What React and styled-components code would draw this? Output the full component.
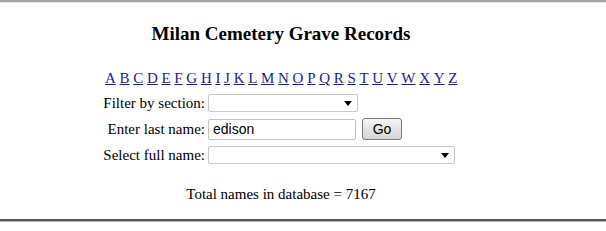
import styled, { createGlobalStyle } from "styled-components";

const GlobalStyle = createGlobalStyle`
  html, body {
    margin: 0;
    padding: 0;
    background: #fff;
  }
  body {
    font-family: "Liberation Serif", "Times New Roman", serif;
    color: #000;
  }
`;

const Frame = styled.div`
  width: 606px;
  height: 231px;
  box-sizing: border-box;
  border-top: 2px solid #a3a3a3;
  display: flex;
  flex-direction: column;
  overflow: hidden;
`;

const TopShade = styled.div`
  height: 1px;
  background: #e6e6e6;
`;

const Content = styled.div`
  width: 562px;
  height: 216px;
  display: flex;
  flex-direction: column;
  align-items: center;
`;

const Title = styled.h1`
  margin: 20px 0 0;
  font-size: 19px;
  line-height: 22px;
  font-weight: 700;
`;

const Block = styled.div`
  margin: 24px 0 0 4px;
  width: 356px;
  display: flex;
  flex-direction: column;
`;

const Letters = styled.div`
  display: flex;
  gap: 3.7px;
  font-size: 15px;
  line-height: 18px;
`;

const Letter = styled.a`
  color: #1d1d8f;
  text-decoration: underline;
`;

const Form = styled.div`
  margin-top: 7px;
  display: grid;
  grid-template-columns: 100px auto;
  column-gap: 3px;
  row-gap: 6px;
  align-items: center;
  justify-items: start;
`;

const Label = styled.label`
  justify-self: end;
  font-size: 15px;
  line-height: 18px;
  white-space: nowrap;
`;

const SelectWrap = styled.div`
  position: relative;
  width: ${(p) => p.$width}px;
  height: 18px;
`;

const Select = styled.select`
  appearance: none;
  display: block;
  width: 100%;
  height: 100%;
  box-sizing: border-box;
  border: 1px solid #c9c9c9;
  border-radius: 2px;
  background: #fff;
  font-family: "Liberation Sans", Arial, sans-serif;
  font-size: 13px;
  padding: 0 4px;
`;

const Arrow = styled.span`
  position: absolute;
  right: 6px;
  top: 7px;
  width: 0;
  height: 0;
  border-left: 4px solid transparent;
  border-right: 4px solid transparent;
  border-top: 5px solid #000;
  pointer-events: none;
`;

const InputRow = styled.div`
  display: flex;
  align-items: center;
  gap: 6px;
`;

const TextInput = styled.input`
  width: 148px;
  height: 21px;
  box-sizing: border-box;
  border: 1px solid #c4c4c4;
  border-radius: 2px;
  font-family: "Liberation Sans", Arial, sans-serif;
  font-size: 14px;
  padding: 0 4px;
  color: #000;
  outline: none;
`;

const GoButton = styled.button`
  width: 40px;
  height: 22px;
  box-sizing: border-box;
  border: 1px solid #7a7a7a;
  border-radius: 3px;
  background: linear-gradient(#f6f6f6, #e4e4e4 50%, #d6d6d6);
  font-family: "Liberation Sans", Arial, sans-serif;
  font-size: 14px;
  color: #000;
  padding: 0;
`;

const Total = styled.div`
  margin-top: 21px;
  font-size: 15px;
  line-height: 18px;
`;

const Spacer = styled.div`
  flex: 1;
`;

const BottomRule = styled.div`
  height: 2px;
  background: #585858;
`;

const BottomShade = styled.div`
  height: 1px;
  background: #b5b5b5;
`;

const BottomFill = styled.div`
  flex: 1;
  background: #fff;
`;

const LETTERS = "ABCDEFGHIJKLMNOPQRSTUVWXYZ".split("");

export default function App() {
  return (
    <>
      <GlobalStyle />
      <Frame>
        <TopShade />
        <Content>
          <Title>Milan Cemetery Grave Records</Title>
          <Block>
            <Letters>
              {LETTERS.map((l) => (
                <Letter key={l} href="#">
                  {l}
                </Letter>
              ))}
            </Letters>
            <Form>
              <Label>Filter by section:</Label>
              <SelectWrap $width={150}>
                <Select>
                  <option></option>
                </Select>
                <Arrow />
              </SelectWrap>
              <Label>Enter last name:</Label>
              <InputRow>
                <TextInput defaultValue="edison" />
                <GoButton>Go</GoButton>
              </InputRow>
              <Label>Select full name:</Label>
              <SelectWrap $width={247}>
                <Select>
                  <option></option>
                </Select>
                <Arrow />
              </SelectWrap>
            </Form>
          </Block>
          <Total>Total names in database = 7167</Total>
          <Spacer />
        </Content>
        <BottomRule />
        <BottomShade />
        <BottomFill />
      </Frame>
    </>
  );
}
